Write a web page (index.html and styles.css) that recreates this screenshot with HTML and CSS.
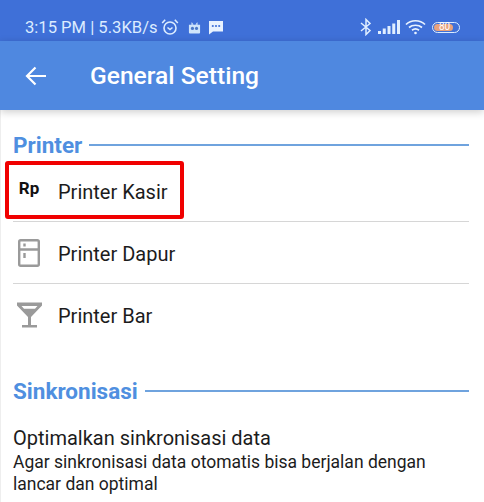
FILE: index.html
```html
<!DOCTYPE html>
<html lang="en">
<head>
  <meta charset="UTF-8">
  <title>General Setting</title>
  <link rel="stylesheet" href="styles.css">
</head>
<body>
  <div class="status-bar">
    <div class="status-left">
      <span>3:15 PM | 5.3KB/s</span>
      <svg class="st-alarm" width="18" height="18" viewBox="0 0 18 18" fill="none" stroke="#dcecff" stroke-width="1.600">
        <circle cx="9" cy="10" r="6"/>
        <path d="M6.500 9.500 9 11.500l2.500-2M1.200 5 4.200 1.800M16.800 5 13.800 1.800"/>
      </svg>
      <svg class="st-app" width="13" height="13" viewBox="0 0 14 14">
        <path fill="#cfe4fb" d="M1 4h12v8.500a1 1 0 0 1-1 1H2a1 1 0 0 1-1-1z"/>
        <path fill="#cfe4fb" d="M3.500 4 4 1l2 3zM10.500 4 10 1 8 4z"/>
        <circle cx="4.800" cy="8" r="1.700" fill="#4a78c8"/>
        <circle cx="9.200" cy="8" r="1.700" fill="#4a78c8"/>
      </svg>
      <svg class="st-msg" width="16" height="15" viewBox="0 0 16 15">
        <path fill="#e8f2ff" d="M1 1h14v10.500H5L1 14.500z"/>
        <circle cx="4.800" cy="6" r="1.100" fill="#3f70d8"/>
        <circle cx="8" cy="6" r="1.100" fill="#3f70d8"/>
        <circle cx="11.200" cy="6" r="1.100" fill="#3f70d8"/>
      </svg>
    </div>
    <div class="status-right">
      <svg width="12" height="18" viewBox="0 0 12 18" fill="none" stroke="#e0eeff" stroke-width="1.500">
        <path d="M1 5 10 12.500 6 16.500V1.500l4 4L1 13"/>
      </svg>
      <svg class="st-signal" width="22" height="15" viewBox="0 0 22 15" fill="#e0eeff">
        <rect x="0" y="11" width="3" height="3"/>
        <rect x="4.750" y="8.500" width="3" height="5.500"/>
        <rect x="9.500" y="6" width="3" height="8"/>
        <rect x="14.250" y="3.500" width="3" height="10.500"/>
        <rect x="19" y="0" width="3" height="14"/>
      </svg>
      <svg class="st-wifi" width="21" height="16" viewBox="0 0 21 16" fill="none" stroke="#e8f2ff" stroke-width="1.700">
        <path d="M1 5.500C6 .5 15 .5 20 5.500M4 8.500c3.500-3 9.500-3 13 0M7 11.300c2-1.500 5-1.500 7 0"/>
        <circle cx="10.500" cy="14" r="1.300" fill="#e8f2ff" stroke="none"/>
      </svg>
      <div class="battery"><div class="battery-fill"></div><span class="battery-num">80</span></div>
    </div>
  </div>

  <div class="toolbar">
    <svg width="22" height="20" viewBox="0 0 22 20" fill="none" stroke="#fff" stroke-width="2.200">
      <path d="M21 10H2M10.500 1.500 2 10l8.500 8.500"/>
    </svg>
    <h1 class="toolbar-title">General Setting</h1>
  </div>

  <div class="content">
    <div class="section-head">
      <span>Printer</span>
      <div class="section-line"></div>
    </div>

    <div class="row row-kasir">
      <div class="row-icon"><span class="rp">Rp</span></div>
      <div class="row-label">Printer Kasir</div>
      <div class="highlight"></div>
    </div>
    <div class="row">
      <div class="row-icon">
        <svg width="22" height="28" viewBox="0 0 22 28" fill="none" stroke="#9a9a9a" stroke-width="2.400">
          <rect x="1.200" y="1.200" width="19.600" height="25.600" rx="1.500"/>
          <path d="M1 10.500h20M6.500 4.500v3M6.500 14v5"/>
        </svg>
      </div>
      <div class="row-label">Printer Dapur</div>
    </div>
    <div class="row row-last">
      <div class="row-icon">
        <svg width="25" height="26" viewBox="0 0 25 26">
          <path fill="#9a9a9a" d="M0 .5h25v3L14 15v8h6v2.500H5V23h6v-8L0 3.500z"/>
          <path fill="#fff" d="M4.500 4h16l-2.500 2.800H7z"/>
        </svg>
      </div>
      <div class="row-label">Printer Bar</div>
    </div>

    <div class="section-head section-sync">
      <span>Sinkronisasi</span>
      <div class="section-line"></div>
    </div>

    <div class="sync-block">
      <div class="sync-title">Optimalkan sinkronisasi data</div>
      <div class="sync-desc">Agar sinkronisasi data otomatis bisa berjalan dengan lancar dan optimal</div>
    </div>
  </div>
</body>
</html>
```

FILE: styles.css
```css
html, body {
  margin: 0;
  padding: 0;
}

body {
  width: 484px;
  height: 502px;
  overflow: hidden;
  background: #ffffff;
  font-family: Roboto, sans-serif;
  color: #1c1c1c;
}

.status-bar {
  height: 41px;
  background-color: #3f70d8;
  color: #dcecff;
  display: flex;
  justify-content: space-between;
  align-items: center;
  padding: 13px 24px 0 25px;
  box-sizing: border-box;
  font-size: 16.600px;
}

.status-left, .status-right {
  display: flex;
  align-items: center;
}

.st-alarm { margin-left: 3px; }
.st-app { margin-left: 9px; }
.st-msg { margin-left: 7px; }

.st-signal { margin-left: 6px; }
.st-wifi { margin-left: 5px; }

.battery {
  position: relative;
  margin-left: 6px;
  width: 24px;
  height: 7px;
  border: 1px solid #dcecff;
  border-radius: 6px;
  padding: 1px;
  box-sizing: content-box;
}

.battery-fill {
  width: 80%;
  height: 100%;
  background: #e8a27c;
  border-radius: 4px;
}

.battery-num {
  position: absolute;
  left: 6px;
  top: -2px;
  font-size: 10px;
  color: #fff;
}

.toolbar {
  position: relative;
  height: 69px;
  background-color: #4f88e0;
  display: flex;
  align-items: center;
  padding: 0 0 0 25px;
  box-shadow: 0 2px 8px rgba(0,0,0,0.2);
}

.toolbar-title {
  margin: 0 0 0 43px;
  font-size: 24.600px;
  font-weight: 500;
  color: #ffffff;
}

.content {
  border-left: 1px solid #eeeeee;
  padding-left: 12px;
  padding-right: 15px;
  height: 392px;
}

.section-head {
  display: flex;
  align-items: center;
  padding-top: 23px;
  height: 24px;
  color: #4f8fe0;
  font-size: 22.500px;
  font-weight: 700;
}

.section-line {
  flex: 1;
  height: 2px;
  margin-left: 7px;
  background: #6fa3de;
}

.section-sync {
  padding-top: 33px;
}

.row {
  position: relative;
  height: 62px;
  display: flex;
  align-items: center;
  border-bottom: 1px solid #d6d6d6;
  box-sizing: border-box;
}

.row-last {
  border-bottom: none;
}

.row-icon {
  width: 32px;
  margin-right: 13px;
  display: flex;
  justify-content: center;
}

.row-label {
  font-size: 20px;
  padding-top: 2px;
}

.rp {
  font-size: 17px;
  font-weight: 700;
  color: #111;
  margin-bottom: 6px;
}

.row-kasir {
  margin-top: 3px;
}

.highlight {
  position: absolute;
  left: -8px;
  top: 1px;
  width: 171px;
  height: 50px;
  border: 4px solid #f00000;
  border-radius: 3px;
}

.sync-block {
  padding-top: 23px;
}

.sync-title {
  font-size: 20px;
  line-height: 24px;
}

.sync-desc {
  margin-top: 1px;
  font-size: 17.500px;
  line-height: 22px;
  width: 430px;
}
```
